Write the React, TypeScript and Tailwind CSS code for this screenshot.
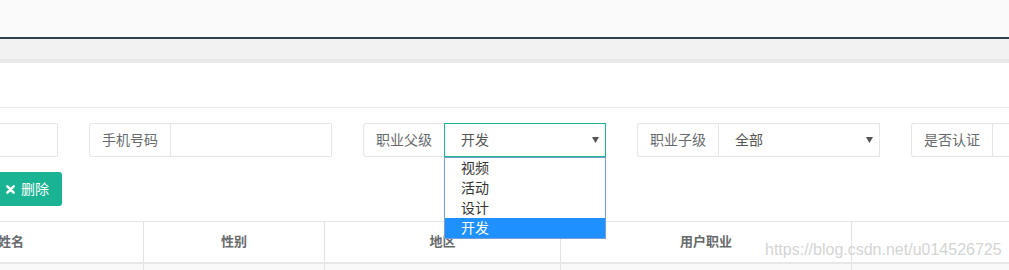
import React from "react";

const FONT = "font-['Liberation_Sans','Noto_Sans_CJK_SC',sans-serif]";

const Arrow = () => (
  <svg width="7" height="6" viewBox="0 0 7 6" className="shrink-0">
    <path d="M0 0h7L3.5 6z" fill="#555" />
  </svg>
);

const InputGroup = ({ label }: { label?: string }) => (
  <div className="flex w-[243px] h-[34px] shrink-0">
    <div className="w-[81px] h-full flex items-center justify-center border border-r-0 border-[#e5e6e7] rounded-l-[3px] text-[14px] text-[#676a6c]">
      {label}
    </div>
    <div className="flex-1 h-full border border-[#e5e6e7] rounded-r-[1px]" />
  </div>
);

const SelectGroup = ({
  label,
  value,
  focused,
  options,
}: {
  label: string;
  value: string;
  focused?: boolean;
  options?: string[];
}) => (
  <div className="flex w-[243px] h-[34px] shrink-0">
    <div className="w-[81px] h-full flex items-center justify-center border border-r-0 border-[#e5e6e7] rounded-l-[3px] text-[14px] text-[#676a6c]">
      {label}
    </div>
    <div className="relative flex-1 h-full">
      <div
        className={
          focused
            ? "h-full flex items-center justify-between pl-4 pr-[6px] border border-[#1ab394] text-[14px] text-[#555]"
            : "h-full flex items-center justify-between pl-4 pr-[6px] border border-[#e5e6e7] text-[14px] text-[#555]"
        }
      >
        <span>{value}</span>
        <Arrow />
      </div>
      {options && (
        <ul className="absolute left-0 top-[34px] w-full border border-[#7a9cd6] bg-white z-10">
          {options.map((o) => (
            <li
              key={o}
              className={
                o === value
                  ? "h-[20px] leading-[20px] pl-4 text-[14px] bg-[#1e90ff] text-white"
                  : "h-[20px] leading-[20px] pl-4 text-[14px] text-[#333]"
              }
            >
              {o}
            </li>
          ))}
        </ul>
      )}
    </div>
  </div>
);

const cols = [
  { w: "w-[265px]", title: "姓名" },
  { w: "w-[181px]", title: "性别" },
  { w: "w-[236px]", title: "地区" },
  { w: "w-[291px]", title: "用户职业" },
];

export default function App() {
  return (
    <div className={`relative w-[1009px] h-[270px] overflow-hidden bg-white ${FONT}`}>
      <div className="h-[37px] bg-[#fafafa]" />
      <div className="h-[2px] bg-[#2f4050]" />
      <div className="h-[20px] bg-[#f2f2f2]" />
      <div className="h-[4px] bg-[#e7e9eb]" />
      <div className="h-[45px] border-b border-[#e7eaec]" />

      {/* search row, scrolled so the first group is mostly off to the left */}
      <div className="flex gap-[31px] ml-[-185px] mt-[15px]">
        <InputGroup />
        <InputGroup label="手机号码" />
        <SelectGroup
          label="职业父级"
          value="开发"
          focused
          options={["视频", "活动", "设计", "开发"]}
        />
        <SelectGroup label="职业子级" value="全部" />
        <InputGroup label="是否认证" />
      </div>

      <div className="mt-[15px] flex">
        <button className="ml-[-6px] h-[34px] pl-3 pr-[13px] flex items-center gap-[6px] bg-[#1ab394] rounded-[3px] text-white text-[14px]">
          <svg width="9" height="9" viewBox="0 0 10 10">
            <path d="M1.5 1.5l7 7M8.5 1.5l-7 7" stroke="#fff" strokeWidth="2.8" strokeLinecap="round" />
          </svg>
          <span>删除</span>
        </button>
      </div>

      <div className="mt-[15px] ml-[-121px] border-t border-[#e7e7e7]">
        <div className="flex h-[42px] border-b-2 border-[#e7e7e7]">
          {cols.map((c) => (
            <div
              key={c.title}
              className={`${c.w} shrink-0 h-full border-r border-[#e2e2e2] flex items-center justify-center text-[13px] font-bold text-[#676a6c]`}
            >
              {c.title}
            </div>
          ))}
          <div className="flex-1" />
        </div>
        <div className="flex h-[20px] bg-[#f9f9f9]">
          {cols.map((c) => (
            <div key={c.title} className={`${c.w} shrink-0 h-full border-r border-[#e2e2e2]`} />
          ))}
        </div>
      </div>

      <div className="absolute left-[765px] top-[241px] text-[16px] leading-[18px] text-[#d4d4d4] font-['Liberation_Sans',sans-serif] pointer-events-none">
        https://blog.csdn.net/u014526725
      </div>
    </div>
  );
}
